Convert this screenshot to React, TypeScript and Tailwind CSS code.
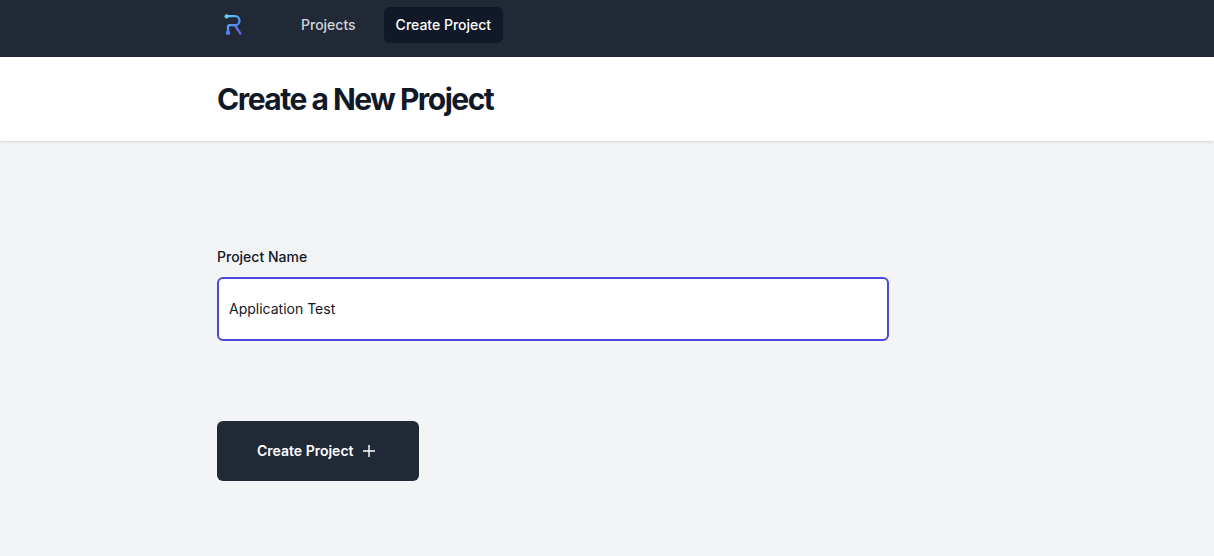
import { useState } from 'react';

const navigation = [
  { name: 'Projects', href: '#projects', current: false },
  { name: 'Create Project', href: '#create', current: true },
];

const Logo = () => (
  <svg className="h-8 w-8" viewBox="0 0 32 32" fill="none" aria-label="Logo">
    <defs>
      <linearGradient id="logo" x1="8" y1="6" x2="24" y2="26" gradientUnits="userSpaceOnUse">
        <stop stopColor="#67d5f5" />
        <stop offset="0.5" stopColor="#4f95f7" />
        <stop offset="1" stopColor="#6d4fe0" />
      </linearGradient>
    </defs>
    <path
      d="M10 7.2h8a4.5 4.5 0 0 1 0 9H13a2 2 0 0 0-2 2V24M18 16.4 24 25.5"
      stroke="url(#logo)"
      strokeWidth="2.3"
    />
    <circle cx="9.6" cy="7.4" r="2.1" fill="url(#logo)" />
    <circle cx="11" cy="23.8" r="2.2" fill="#4f83f8" />
  </svg>
);

const PlusIcon = () => (
  <svg className="h-5 w-5" viewBox="0 0 24 24" fill="none" stroke="currentColor" strokeWidth="1.7" aria-hidden="true">
    <path d="M12 4.8v14.4M4.8 12h14.4" />
  </svg>
);

const App = () => {
  const [name, setName] = useState('Application Test');

  return (
    <div className="min-h-screen bg-[#f3f4f6] font-['Inter',sans-serif] text-[#111827]">
      <nav className="bg-[#212936] pt-[7px] pb-[14px]">
        <div className="mx-auto flex max-w-[780px] items-center">
          <Logo />
          <div className="ml-10 flex gap-4">
            {navigation.map((item) => (
              <a
                key={item.name}
                href={item.href}
                aria-current={item.current ? 'page' : undefined}
                className={`rounded-md px-3 py-2 text-sm font-medium ${
                  item.current ? 'bg-[#111827] text-white' : 'text-[#d1d5db] hover:text-white'
                }`}
              >
                {item.name}
              </a>
            ))}
          </div>
        </div>
      </nav>

      <header className="bg-white shadow-sm">
        <div className="mx-auto max-w-[780px] py-6">
          <h1 className="text-3xl font-bold tracking-tighter">Create a New Project</h1>
        </div>
      </header>

      <main className="mx-auto max-w-[780px] pt-26">
        <form onSubmit={(e) => e.preventDefault()}>
          <label htmlFor="project-name" className="block text-sm leading-6 font-medium">
            Project Name
          </label>
          <input
            id="project-name"
            type="text"
            value={name}
            onChange={(e) => setName(e.target.value)}
            className="mt-2 block w-full max-w-2xl rounded-md border-2 border-[#4b48dc] bg-white px-[10px] py-5 text-sm outline-none"
          />
          <button
            type="submit"
            className="mt-20 flex items-center gap-1.5 rounded-md bg-[#212936] px-10 py-5 text-sm font-semibold text-white"
          >
            Create Project
            <PlusIcon />
          </button>
        </form>
      </main>
    </div>
  );
};

export default App;
